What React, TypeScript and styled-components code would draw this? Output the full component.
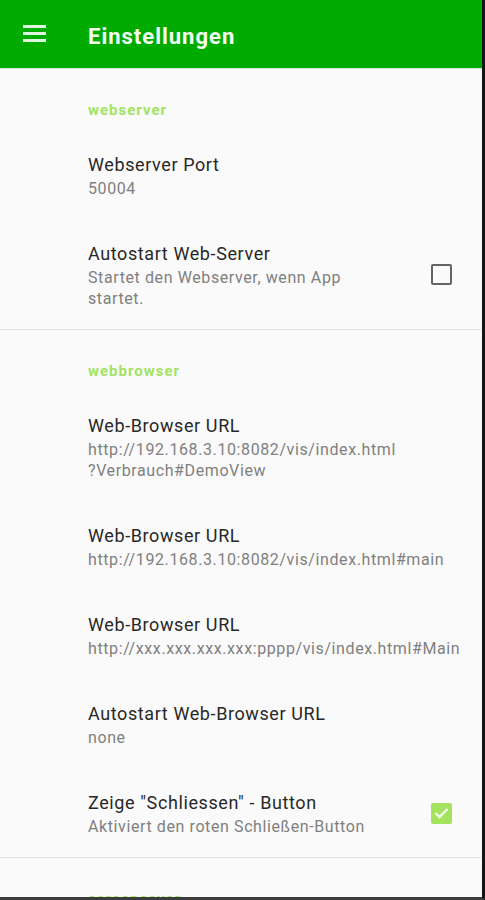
import React from "react";
import styled, { createGlobalStyle } from "styled-components";

const Global = createGlobalStyle`
  html, body { margin: 0; padding: 0; background: #fafafa; }
  body { font-family: Roboto, "Noto Sans", "Liberation Sans", sans-serif; }
  * { box-sizing: border-box; }
`;

const Frame = styled.div`
  width: 485px;
  height: 900px;
  overflow: hidden;
  background: #fafafa;
  border-right: 3px solid #141414;
  border-bottom: 3px solid #3c3c3c;
  display: flex;
  flex-direction: column;
`;

const AppBar = styled.header`
  height: 69px;
  flex: 0 0 69px;
  background: #00ab00;
  border-bottom: 1px solid #d6ecd6;
  display: flex;
  align-items: center;
  padding-left: 23px;
`;

const MenuIcon = styled.div`
  width: 23px;
  height: 17px;
  display: flex;
  flex-direction: column;
  justify-content: space-between;
  margin-top: -1px;
  span {
    display: block;
    height: 3px;
    background: rgba(255, 255, 255, 0.88);
  }
`;

const Title = styled.h1`
  margin: 4px 0 0 42px;
  font-size: 22px;
  font-weight: 700;
  color: #f4fff4;
  letter-spacing: 1px;
`;

const Section = styled.section<{ $last?: boolean }>`
  border-bottom: ${(p) => (p.$last ? "none" : "1px solid #e2e2e2")};
`;

const Category = styled.div`
  padding: 31px 0 10px 88px;
  line-height: 20px;
  font-size: 15px;
  font-weight: 700;
  letter-spacing: 1px;
  color: #a3e363;
`;

const Item = styled.div`
  display: flex;
  align-items: center;
  padding: 21px 30px 20px 88px;
`;

const Texts = styled.div`
  flex: 1;
  min-width: 0;
`;

const ItemTitle = styled.div`
  font-size: 18px;
  line-height: 27px;
  letter-spacing: 0.6px;
  color: #282828;
`;

const Summary = styled.div`
  font-size: 16px;
  line-height: 21px;
  letter-spacing: 0.6px;
  color: #808080;
  white-space: pre-line;
`;

const Box = styled.div<{ $checked?: boolean }>`
  width: 21px;
  height: 21px;
  flex: 0 0 21px;
  border-radius: 2px;
  border: ${(p) => (p.$checked ? "none" : "2px solid #646464")};
  background: ${(p) => (p.$checked ? "#a3e35e" : "transparent")};
  display: flex;
  align-items: center;
  justify-content: center;
  margin-left: 16px;
`;

type Pref = { title: string; summary?: string; checkbox?: boolean; checked?: boolean };
type Cat = { name: string; items: Pref[] };

const data: Cat[] = [
  {
    name: "webserver",
    items: [
      { title: "Webserver Port", summary: "50004" },
      {
        title: "Autostart Web-Server",
        summary: "Startet den Webserver, wenn App\nstartet.",
        checkbox: true,
        checked: false,
      },
    ],
  },
  {
    name: "webbrowser",
    items: [
      {
        title: "Web-Browser URL",
        summary: "http://192.168.3.10:8082/vis/index.html\n?Verbrauch#DemoView",
      },
      { title: "Web-Browser URL", summary: "http://192.168.3.10:8082/vis/index.html#main" },
      { title: "Web-Browser URL", summary: "http://xxx.xxx.xxx.xxx:pppp/vis/index.html#Main" },
      { title: "Autostart Web-Browser URL", summary: "none" },
      {
        title: "Zeige \"Schliessen\" - Button",
        summary: "Aktiviert den roten Schließen-Button",
        checkbox: true,
        checked: true,
      },
    ],
  },
  { name: "screensaver", items: [] },
];

const Check = () => (
  <svg width="15" height="12" viewBox="0 0 15 12">
    <path d="M1.5 6.2 L5.5 10 L13.5 2" fill="none" stroke="#f4fff0" strokeWidth="2.4" />
  </svg>
);

export default function App() {
  return (
    <Frame>
      <Global />
      <AppBar>
        <MenuIcon>
          <span />
          <span />
          <span />
        </MenuIcon>
        <Title>Einstellungen</Title>
      </AppBar>
      {data.map((c, i) => (
        <Section key={i} $last={i === data.length - 1}>
          <Category>{c.name}</Category>
          {c.items.map((it, j) => (
            <Item key={j}>
              <Texts>
                <ItemTitle>{it.title}</ItemTitle>
                {it.summary && <Summary>{it.summary}</Summary>}
              </Texts>
              {it.checkbox && <Box $checked={it.checked}>{it.checked && <Check />}</Box>}
            </Item>
          ))}
        </Section>
      ))}
    </Frame>
  );
}
